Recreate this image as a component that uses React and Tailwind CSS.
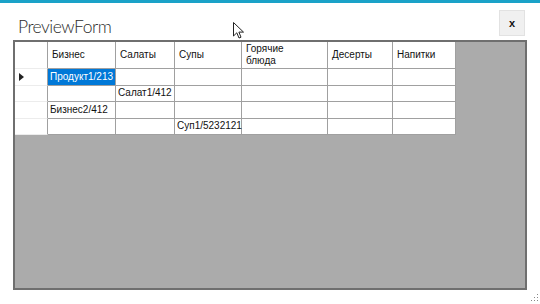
import React from "react";

const cols = ["w-[33px]", "w-[68px]", "w-[59px]", "w-[67px]", "w-[86px]", "w-[65px]", "w-[63px]"];
const headers = ["Бизнес", "Салаты", "Супы", "Горячие блюда", "Десерты", "Напитки"];
const rows = [
  ["Продукт1/213", "", "", "", "", ""],
  ["", "Салат1/412", "", "", "", ""],
  ["Бизнес2/412", "", "", "", "", ""],
  ["", "", "Суп1/5232121", "", "", ""],
];

export default function App() {
  return (
    <div
      className="w-[540px] h-[304px] bg-white flex flex-col relative overflow-hidden"
      style={{ fontFamily: '"Liberation Sans", Arial, sans-serif' }}
    >
      <div className="h-[3px] bg-[#1aa2c8] shrink-0" />
      <div className="h-[37px] shrink-0 flex items-start justify-between pl-[18px] pr-[15px]">
        <div
          className="mt-[14px] text-[17.5px] leading-[20px] font-light tracking-[-0.5px] text-[#2b2b2b]"
          style={{ fontFamily: 'Lato, sans-serif' }}
        >
          PreviewForm
        </div>
        <div className="mt-[7px] w-[26px] h-[26px] bg-[#f0f0f0] border border-[#e2e2e2] flex items-center justify-center text-[11px] font-bold text-[#111]">
          x
        </div>
      </div>
      <div className="ml-[13px] w-[514px] h-[250px] border-2 border-[#6f6f6f] bg-[#ababab] shrink-0">
        <div className="flex flex-col w-max">
          <div className="flex h-[27px]">
            <div className={`${cols[0]} bg-white border-r border-[#a0a0a0] border-b border-b-[#ececec]`} />
            {headers.map((h, i) => (
              <div
                key={h}
                className={`${cols[i + 1]} bg-white border-r border-b border-[#a0a0a0] flex items-center pl-[4px] pr-[2px] text-[10px] leading-[12px] text-[#111]`}
              >
                {h === "Горячие блюда" ? (
                  <span>
                    Горячие
                    <br />
                    блюда
                  </span>
                ) : (
                  h
                )}
              </div>
            ))}
          </div>
          {rows.map((r, ri) => (
            <div key={ri} className="flex h-[16.5px]">
              <div className={`${cols[0]} bg-white border-r border-[#a0a0a0] border-b border-b-[#ececec] flex items-center pl-[4px]`}>
                {ri === 0 && (
                  <svg width="6" height="8" viewBox="0 0 6 8">
                    <path d="M0 0 L5 4 L0 8 Z" fill="#222" />
                  </svg>
                )}
              </div>
              {r.map((c, ci) => {
                const sel = ri === 0 && ci === 0;
                return (
                  <div
                    key={ci}
                    className={`${cols[ci + 1]} border-r border-b border-[#a0a0a0] flex items-center pl-[2px] text-[10px] leading-[12px] whitespace-nowrap ${
                      sel ? "bg-[#0078d7] text-white" : "bg-white text-[#111]"
                    }`}
                  >
                    {c}
                  </div>
                );
              })}
            </div>
          ))}
        </div>
      </div>
      <svg className="absolute left-[233px] top-[22px]" width="12" height="18" viewBox="0 0 12 18">
        <path d="M0.5 0.5 L0.5 14 L3.8 10.8 L6 16 L8 15.2 L5.9 10.1 L10.5 10.1 Z" fill="white" stroke="#222" strokeWidth="1" strokeLinejoin="round" />
      </svg>
      <svg className="absolute left-[531px] top-[294px]" width="8" height="8" viewBox="0 0 8 8">
        <rect x="6" y="0" width="1" height="1" fill="#888" />
        <rect x="3" y="3" width="1" height="1" fill="#888" />
        <rect x="6" y="3" width="1" height="1" fill="#888" />
        <rect x="0" y="6" width="1" height="1" fill="#888" />
        <rect x="3" y="6" width="1" height="1" fill="#888" />
        <rect x="6" y="6" width="1" height="1" fill="#888" />
      </svg>
    </div>
  );
}
